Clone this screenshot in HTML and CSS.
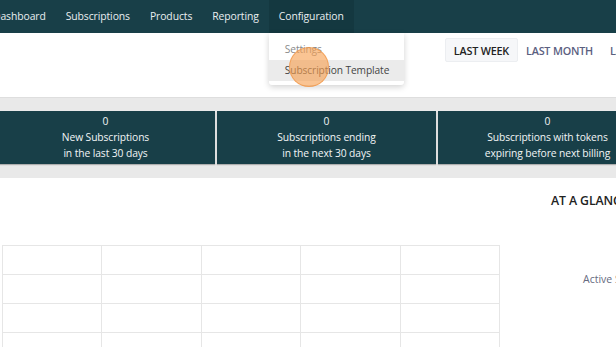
FILE: index.html
```html
<!DOCTYPE html>
<html>
<head>
<meta charset="utf-8">
<link rel="stylesheet" href="styles.css">
</head>
<body>
<div class="page">
  <nav class="nav">
    <ul class="menu">
      <li class="menu-item">Dashboard</li>
      <li class="menu-item">Subscriptions</li>
      <li class="menu-item">Products</li>
      <li class="menu-item">Reporting</li>
      <li class="menu-item active">Configuration
        <div class="dropdown">
          <div class="dd-item muted">Settings</div>
          <div class="dd-item hover">Subscription Template</div>
          <span class="click-dot"></span>
        </div>
      </li>
    </ul>
  </nav>
  <header class="toolbar">
    <div class="ranges">
      <button class="range on">LAST WEEK</button>
      <button class="range">LAST MONTH</button>
      <button class="range">LAST YEAR</button>
    </div>
  </header>
  <section class="stats">
    <div class="stat"><div>0</div><div>New Subscriptions</div><div>in the last 30 days</div></div>
    <div class="stat"><div>0</div><div>Subscriptions ending</div><div>in the next 30 days</div></div>
    <div class="stat"><div>0</div><div>Subscriptions with tokens</div><div>expiring before next billing</div></div>
  </section>
  <section class="main">
    <div class="chart">
      <div class="grid">
        <div></div><div></div><div></div><div></div><div></div>
        <div></div><div></div><div></div><div></div><div></div>
        <div></div><div></div><div></div><div></div><div></div>
        <div></div><div></div><div></div><div></div><div></div>
      </div>
    </div>
    <aside class="glance">
      <h2 class="glance-title">AT A GLANCE</h2>
      <div class="glance-row">Active Subscriptions</div>
    </aside>
  </section>
</div>
</body>
</html>
```
FILE: styles.css
```css
* { box-sizing: border-box; }
html, body { margin: 0; padding: 0; overflow: hidden; }
body {
  font-family: "Open Sans", "Noto Sans", sans-serif;
  background: #fff;
  width: 616px;
  height: 347px;
}
.page { width: 616px; overflow: hidden; }
.nav {
  height: 33px;
  background: #183f48;
}
.menu {
  list-style: none;
  margin: 0 0 0 -17px;
  padding: 0;
  display: flex;
  height: 33px;
  white-space: nowrap;
}
.menu-item {
  position: relative;
  padding: 0 10px;
  color: #e9eef0;
  font-size: 10.4px;
  letter-spacing: -0.1px;
  line-height: 33px;
}
.menu-item.active { background: #143840; }
.dropdown {
  position: absolute;
  left: 0;
  top: 33px;
  width: 135px;
  padding: 6px 0 4px;
  background: #fff;
  box-shadow: 0 2px 6px rgba(0,0,0,0.18);
  border-radius: 0 0 3px 3px;
  z-index: 5;
}
.dd-item {
  height: 21px;
  line-height: 21px;
  padding-left: 16px;
  font-size: 10.2px;
  color: #444;
}
.dd-item.muted { color: #8a8a8a; }
.dd-item.hover { background: #ebebeb; }
.click-dot {
  position: absolute;
  left: 20px;
  top: 14px;
  width: 40px;
  height: 40px;
  border-radius: 50%;
  background: rgba(247, 160, 80, 0.62);
  border: 1.5px solid rgba(240, 150, 70, 0.7);
}
.toolbar {
  height: 64px;
  display: flex;
  justify-content: flex-end;
  padding-top: 5px;
}
.ranges {
  display: flex;
  gap: 0;
  margin-right: -55px;
  align-items: flex-start;
}
.range {
  font-family: inherit;
  font-size: 10.8px;
  font-weight: 600;
  letter-spacing: -0.2px;
  height: 24px;
  padding: 0 7.5px;
  border: 1px solid transparent;
  background: transparent;
  color: #5b6080;
  border-radius: 2px;
  white-space: nowrap;
}
.range.on {
  background: #f6f7f9;
  border-color: #eceef1;
  color: #222;
}
.stats {
  background: #e9e9e9;
  border-top: 1px solid #dedede;
  padding: 13px 0 14px;
  display: flex;
  gap: 2px;
  margin-left: -4px;
  white-space: nowrap;
}
.stat {
  flex: 0 0 219px;
  height: 53px;
  background: #183f48;
  color: #f2f5f6;
  font-size: 10.3px;
  line-height: 16px;
  text-align: center;
  padding-top: 2px;
  box-shadow: 0 1px 1px rgba(0,0,0,0.25);
  letter-spacing: -0.1px;
}
.main {
  display: flex;
  padding-top: 14px;
}
.chart {
  flex: 0 0 510px;
  padding-top: 53px;
  padding-left: 2px;
}
.grid {
  width: 498px;
  display: grid;
  grid-template-columns: repeat(5, 1fr);
  grid-auto-rows: 29px;
  border-top: 1px solid #e6e6e6;
  border-left: 1px solid #e6e6e6;
}
.grid div {
  border-right: 1px solid #e6e6e6;
  border-bottom: 1px solid #e6e6e6;
}
.glance { white-space: nowrap; padding-left: 41px; }
.glance-title {
  margin: 0;
  font-size: 12.3px;
  font-weight: 600;
  color: #222;
  letter-spacing: -0.1px;
}
.glance-row {
  margin-top: 63px;
  padding-left: 32px;
  font-size: 10.5px;
  color: #666a80;
}
```
